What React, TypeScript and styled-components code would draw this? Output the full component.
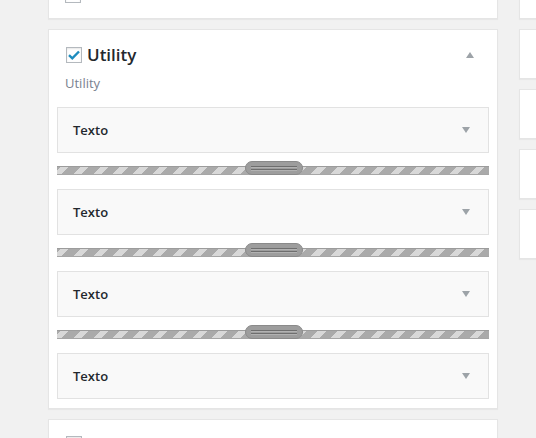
import React from "react";
import styled, { createGlobalStyle } from "styled-components";

const Global = createGlobalStyle`
  html, body { margin: 0; padding: 0; background: #f1f1f1; overflow: hidden; }
  body { font-family: "Open Sans", "Noto Sans", sans-serif; color: #23282d; }
`;

const Page = styled.div`
  display: flex;
  gap: 21px;
  padding-left: 48px;
  margin-top: -14px;
`;

const Main = styled.div`
  width: 450px;
  flex-shrink: 0;
  display: flex;
  flex-direction: column;
  gap: 10px;
`;

const Side = styled.div`
  width: 200px;
  flex-shrink: 0;
  display: flex;
  flex-direction: column;
  gap: 10px;
`;

const SideBox = styled.div<{ $h: number }>`
  height: ${(p) => p.$h}px;
  box-sizing: border-box;
  background: #fff;
  border: 1px solid #e5e5e5;
  box-shadow: 0 1px 1px rgba(0, 0, 0, 0.04);
`;

const Card = styled.div<{ $h?: number }>`
  box-sizing: border-box;
  background: #fff;
  border: 1px solid #e5e5e5;
  box-shadow: 0 1px 1px rgba(0, 0, 0, 0.04);
  ${(p) => (p.$h ? `height: ${p.$h}px; overflow: hidden;` : "")}
`;

const TopStub = styled.div`
  display: flex;
  padding: 0 16px 15px 16px;
`;

const Header = styled.div<{ $top: number }>`
  display: flex;
  align-items: center;
  padding: ${(p) => p.$top}px 23px 0 17px;
  height: 16px;
`;

const Check = styled.span`
  display: inline-flex;
  align-items: center;
  justify-content: center;
  width: 16px;
  height: 16px;
  box-sizing: border-box;
  border: 1px solid #b4b9be;
  background: #fff;
  box-shadow: inset 0 1px 2px rgba(0, 0, 0, 0.1);
`;

const Title = styled.span`
  margin-left: 5px;
  font-size: 17px;
  font-weight: 600;
  color: #23282d;
  flex: 1;
  line-height: 16px;
`;

const Subtitle = styled.div`
  padding: 0 0 0 16px;
  margin-top: 11px;
  font-size: 13px;
  line-height: 18px;
  color: #7a8290;
`;

const List = styled.div`
  display: flex;
  flex-direction: column;
  padding: 15px 8px 9px 8px;
`;

const Item = styled.div`
  box-sizing: border-box;
  height: 46px;
  border: 1px solid #e2e2e2;
  background: #f9f9f9;
  display: flex;
  align-items: center;
  padding: 0 18px 0 15px;
`;

const ItemLabel = styled.span`
  flex: 1;
  font-size: 13px;
  font-weight: 600;
  color: #23282d;
`;

const Bar = styled.div`
  position: relative;
  height: 9px;
  margin: 13px 0 14px 0;
  box-sizing: border-box;
  border-top: 1px solid #9c9c9c;
  border-bottom: 1px solid #a6a6a6;
  background: repeating-linear-gradient(
    -45deg,
    #aaaaaa 0px,
    #aaaaaa 8px,
    #d8d8d8 8px,
    #d8d8d8 14px
  );
`;

const Handle = styled.div`
  position: absolute;
  left: 50%;
  top: -6px;
  width: 58px;
  height: 14px;
  margin-left: -28px;
  box-sizing: border-box;
  border-radius: 7px;
  border: 1px solid #8a8a8a;
  background: #9d9d9d;
  display: flex;
  flex-direction: column;
  justify-content: center;
  gap: 2px;
  padding: 0 5px;
`;

const HandleLine = styled.div`
  height: 1px;
  background: #6e6e6e;
  box-shadow: 0 1px 0 #b2b2b2;
`;

const Tick = () => (
  <svg width="12" height="10" viewBox="0 0 12 10">
    <path d="M1 5.2 L4.3 8.3 L11 1.5" fill="none" stroke="#1e8cbe" strokeWidth="2.4" />
  </svg>
);

const Arrow = ({ up }: { up?: boolean }) => (
  <svg width="8" height="6" viewBox="0 0 8 6">
    <polygon points={up ? "0,6 8,6 4,0" : "0,0 8,0 4,6"} fill="#9da3a8" />
  </svg>
);

const Row = ({ last }: { last?: boolean }) => (
  <>
    <Item>
      <ItemLabel>Texto</ItemLabel>
      <Arrow />
    </Item>
    {!last && (
      <Bar>
        <Handle>
          <HandleLine />
          <HandleLine />
        </Handle>
      </Bar>
    )}
  </>
);

export default function App() {
  return (
    <>
      <Global />
      <Page>
        <Main>
          <Card>
            <TopStub>
              <Check />
            </TopStub>
          </Card>
          <Card>
            <Header $top={17}>
              <Check>
                <Tick />
              </Check>
              <Title>Utility</Title>
              <Arrow up />
            </Header>
            <Subtitle>Utility</Subtitle>
            <List>
              <Row />
              <Row />
              <Row />
              <Row last />
            </List>
          </Card>
          <Card $h={60}>
            <Header $top={16}>
              <Check />
            </Header>
          </Card>
        </Main>
        <Side>
          <SideBox $h={33} />
          <SideBox $h={50} />
          <SideBox $h={50} />
          <SideBox $h={50} />
          <SideBox $h={50} />
        </Side>
      </Page>
    </>
  );
}
